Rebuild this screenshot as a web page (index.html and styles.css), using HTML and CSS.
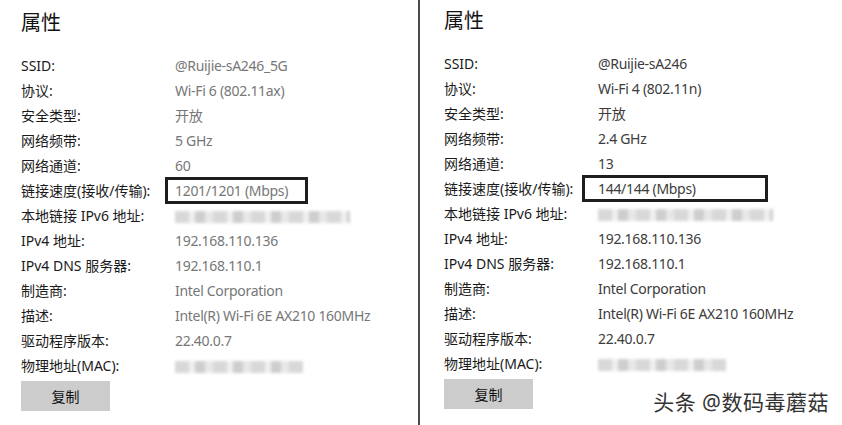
FILE: index.html
```html
<!DOCTYPE html>
<html lang="zh-CN">
<head>
  <meta charset="UTF-8">
  <title>属性</title>
  <link rel="stylesheet" href="styles.css">
</head>
<body>
  <div class="screen">
    <div class="panel panel-5g">
      <h2>属性</h2>
      <div class="props">
        <span class="label">SSID:</span><span class="value">@Ruijie-sA246_5G</span>
        <span class="label">协议:</span><span class="value">Wi-Fi 6 (802.11ax)</span>
        <span class="label">安全类型:</span><span class="value">开放</span>
        <span class="label">网络频带:</span><span class="value">5 GHz</span>
        <span class="label">网络通道:</span><span class="value">60</span>
        <span class="label">链接速度(接收/传输):</span><span class="value"><span class="mark mark-wide">1201/1201 (Mbps)</span></span>
        <span class="label">本地链接 IPv6 地址:</span><span class="value"><span class="blur blur-long"></span></span>
        <span class="label">IPv4 地址:</span><span class="value">192.168.110.136</span>
        <span class="label">IPv4 DNS 服务器:</span><span class="value">192.168.110.1</span>
        <span class="label">制造商:</span><span class="value">Intel Corporation</span>
        <span class="label">描述:</span><span class="value">Intel(R) Wi-Fi 6E AX210 160MHz</span>
        <span class="label">驱动程序版本:</span><span class="value">22.40.0.7</span>
        <span class="label">物理地址(MAC):</span><span class="value"><span class="blur blur-short"></span></span>
      </div>
      <button class="copy">复制</button>
    </div>

    <div class="divider"></div>

    <div class="panel panel-24g">
      <h2>属性</h2>
      <div class="props">
        <span class="label">SSID:</span><span class="value">@Ruijie-sA246</span>
        <span class="label">协议:</span><span class="value">Wi-Fi 4 (802.11n)</span>
        <span class="label">安全类型:</span><span class="value">开放</span>
        <span class="label">网络频带:</span><span class="value">2.4 GHz</span>
        <span class="label">网络通道:</span><span class="value">13</span>
        <span class="label">链接速度(接收/传输):</span><span class="value"><span class="mark mark-wider">144/144 (Mbps)</span></span>
        <span class="label">本地链接 IPv6 地址:</span><span class="value"><span class="blur blur-long"></span></span>
        <span class="label">IPv4 地址:</span><span class="value">192.168.110.136</span>
        <span class="label">IPv4 DNS 服务器:</span><span class="value">192.168.110.1</span>
        <span class="label">制造商:</span><span class="value">Intel Corporation</span>
        <span class="label">描述:</span><span class="value">Intel(R) Wi-Fi 6E AX210 160MHz</span>
        <span class="label">驱动程序版本:</span><span class="value">22.40.0.7</span>
        <span class="label">物理地址(MAC):</span><span class="value"><span class="blur blur-short"></span></span>
      </div>
      <button class="copy">复制</button>
      <div class="watermark">头条 @数码毒蘑菇</div>
    </div>
  </div>
</body>
</html>
```

FILE: styles.css
```css
body {
  margin: 0;
  background: #fff;
  font-family: "Noto Sans", "Noto Sans CJK SC", sans-serif;
  color: #1a1a1a;
}

.screen {
  display: flex;
  width: 842px;
  height: 425px;
  overflow: hidden;
}

.panel {
  position: relative;
  padding: 9px 0 0 21px;
}

.panel-5g {
  width: 397px;
}

.panel-24g {
  flex: 1;
  padding: 7px 0 0 24px;
}

.divider {
  width: 2px;
  background: #4a4a4a;
}

h2 {
  margin: 0 0 16px;
  font-size: 20px;
  font-weight: normal;
  line-height: 28px;
  color: #111;
}

.props {
  display: grid;
  grid-template-columns: 154px auto;
  font-size: 14px;
  line-height: 25px;
}

.label {
  white-space: nowrap;
}

.value {
  white-space: nowrap;
  letter-spacing: -0.3px;
  color: #777;
}

.panel-24g .value {
  color: #3c3c3c;
}

.mark {
  display: inline-block;
  box-sizing: border-box;
  height: 27px;
  margin: -1px 0 -1px -10px;
  padding-left: 7px;
  border: 3px solid #1e1e1e;
  line-height: 21px;
}

.mark-wide {
  width: 143px;
}

.mark-wider {
  width: 186px;
  margin-left: -16px;
  padding-left: 13px;
}

.blur {
  display: inline-block;
  height: 12px;
  vertical-align: middle;
  filter: blur(1.8px);
  opacity: 0.8;
  background:
    repeating-linear-gradient(90deg, #cfcfcf 0 14px, #ececec 14px 20px, #c2c2c2 20px 30px, #e2e2e2 30px 38px);
}

.blur-long {
  width: 175px;
}

.blur-short {
  width: 128px;
}

.copy {
  display: block;
  width: 89px;
  height: 30px;
  margin-top: 3px;
  border: none;
  background: #cccccc;
  font-family: inherit;
  font-size: 14px;
  color: #111;
}

.watermark {
  position: absolute;
  right: 13px;
  bottom: 9px;
  font-size: 21px;
  letter-spacing: 0.5px;
  color: #333;
  text-shadow: 0 0 2px #fff, 0 0 2px #fff;
}
```
